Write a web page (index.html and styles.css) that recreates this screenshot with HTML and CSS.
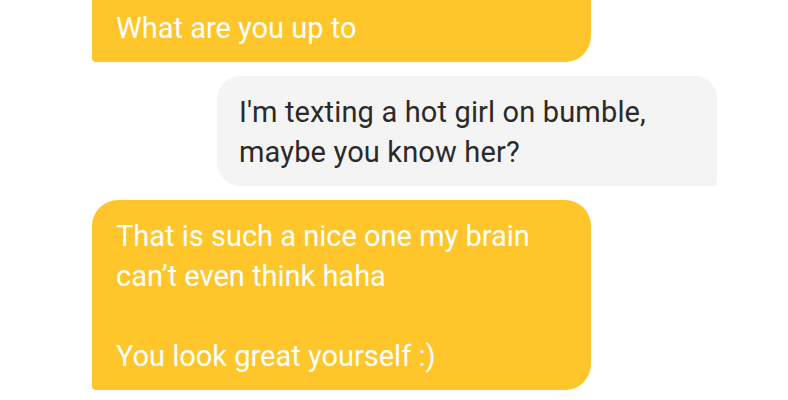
FILE: index.html
```html
<!DOCTYPE html>
<html lang="en">
<head>
  <meta charset="UTF-8" />
  <meta name="viewport" content="width=device-width, initial-scale=1.0" />
  <title>Chat</title>
  <link rel="stylesheet" href="styles.css">
</head>
<body>
  <div class="chat">
    <div class="msg them first">
      <p>What are you up to</p>
    </div>

    <div class="msg me">
      <p>I'm texting a hot girl on bumble,<br>maybe you know her?</p>
    </div>

    <div class="msg them">
      <p>That is such a nice one my brain<br>can’t even think haha</p>
      <p>You look great yourself :)</p>
    </div>
  </div>
</body>
</html>
```

FILE: styles.css
```css
body {
  margin: 0;
  background: #ffffff;
  font-family: Roboto, "Liberation Sans", sans-serif;
}

.chat {
  display: flex;
  flex-direction: column;
  gap: 14px;
  padding: 0 71px 0 92px;
  margin-top: -8px;
}

.msg {
  width: 500px;
  box-sizing: border-box;
  padding: 16px 24px 14px;
  font-size: 29px;
  line-height: 40px;
}

.msg p {
  margin: 0;
}

.msg p + p {
  margin-top: 40px;
}

.them {
  align-self: flex-start;
  width: 499px;
  background: #fec62a;
  color: #ffffff;
  border-radius: 26px 26px 26px 4px;
}

.first {
  border-radius: 0 0 26px 4px;
}

.me {
  align-self: flex-end;
  background: #f4f4f4;
  color: #2a2a2a;
  letter-spacing: 0.15px;
  border-radius: 24px 22px 4px 24px;
  padding-left: 22px;
}
```
